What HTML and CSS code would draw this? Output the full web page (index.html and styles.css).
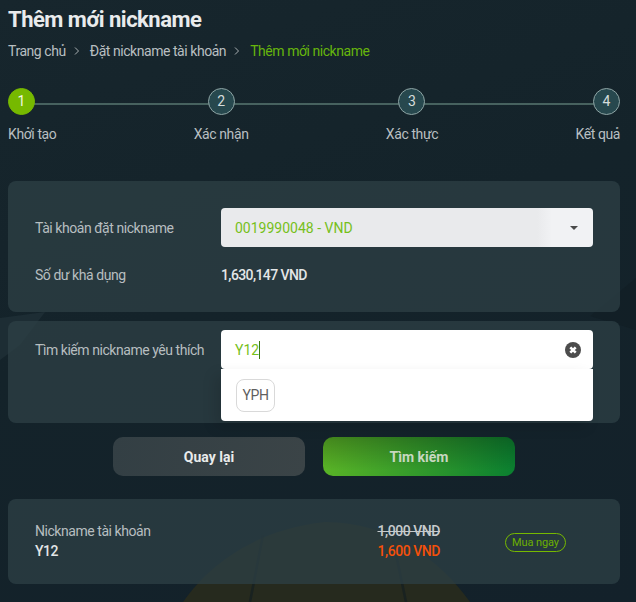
FILE: index.html
```html
<!DOCTYPE html>
<html lang="vi">
<head>
    <meta charset="UTF-8">
    <meta name="viewport" content="width=device-width, initial-scale=1.0">
    <title>Thêm mới nickname</title>
    <link rel="stylesheet" href="styles.css">
</head>
<body>
    <!-- background picture -->
    <svg class="backdrop" width="636" height="602" viewBox="0 0 636 602" aria-hidden="true">
        <path d="M183 602 C205 570 250 530 325 522 C390 522 440 560 470 602 Z" fill="#262a1e"/>
        <path d="M250 602 L263 535 M406 602 L393 540" stroke="#141f22" stroke-width="2.5" opacity="0.7"/>
        <path d="M0 318 L45 312 L20 345 L0 360 Z" fill="#2b3d43" opacity="0.4"/>
        <path d="M590 316 L636 278 L636 330 L610 322 Z" fill="#101c22" opacity="0.5"/>
    </svg>

    <div class="page">
        <h1 class="title">Thêm mới nickname</h1>
        <div class="breadcrumb">
            <span>Trang chủ</span>
            <svg class="sep" width="24" height="8" viewBox="0 0 24 8"><path d="M9 0.5 L12.5 4 L9 7.5" fill="none" stroke="#a9b0b2"/></svg>
            <span>Đặt nickname tài khoản</span>
            <svg class="sep" width="24" height="8" viewBox="0 0 24 8"><path d="M9 0.5 L12.5 4 L9 7.5" fill="none" stroke="#a9b0b2"/></svg>
            <span class="current">Thêm mới nickname</span>
        </div>

        <div class="stepper">
            <div class="step first active">
                <div class="dot">1</div>
                <div class="step-label">Khởi tạo</div>
            </div>
            <div class="step">
                <div class="dot">2</div>
                <div class="step-label">Xác nhận</div>
            </div>
            <div class="step">
                <div class="dot">3</div>
                <div class="step-label">Xác thực</div>
            </div>
            <div class="step last">
                <div class="dot">4</div>
                <div class="step-label">Kết quả</div>
            </div>
        </div>

        <div class="card card-account">
            <div class="row">
                <div class="label">Tài khoản đặt nickname</div>
                <div class="select">
                    <span>0019990048 - VND</span>
                    <span class="caret"></span>
                </div>
            </div>
            <div class="row row-balance">
                <div class="label">Số dư khả dụng</div>
                <div class="balance">1,630,147 VND</div>
            </div>
        </div>

        <div class="card card-search">
            <div class="row row-search">
                <div class="label">Tìm kiếm nickname yêu thích</div>
                <div class="search-box">
                    <div class="search">
                        <span class="typed">Y12</span>
                        <svg class="clear" width="16" height="16" viewBox="0 0 16 16">
                            <circle cx="8" cy="8" r="8" fill="#4c4c4c"/>
                            <path d="M5.3 5.3 L10.7 10.7 M10.7 5.3 L5.3 10.7" stroke="#fff" stroke-width="2.6"/>
                        </svg>
                    </div>
                    <div class="suggest">
                        <span class="chip">YPH</span>
                    </div>
                </div>
            </div>
        </div>

        <div class="actions">
            <button class="btn btn-back">Quay lại</button>
            <button class="btn btn-search">Tìm kiếm</button>
        </div>

        <div class="card card-result">
            <div class="nick">
                <div class="label">Nickname tài khoản</div>
                <div class="nick-value">Y12</div>
            </div>
            <div class="prices">
                <div class="old-price">1,000 VND</div>
                <div class="new-price">1,600 VND</div>
            </div>
            <a class="buy">Mua ngay</a>
        </div>
    </div>
</body>
</html>
```

FILE: styles.css
```css
body {
    font-family: Roboto, 'Liberation Sans', sans-serif;
    margin: 0;
    padding: 0;
    width: 636px;
    height: 602px;
    overflow: hidden;
    position: relative;
    background: linear-gradient(160deg, #17262d 0%, #14232a 45%, #13212a 100%);
    color: #c6cbcd;
    font-size: 14px;
    letter-spacing: -0.45px;
}

.backdrop {
    position: absolute;
    left: 0;
    top: 0;
}

.page {
    position: relative;
    padding: 0 16px 0 8px;
}

.title {
    margin: 0;
    padding-top: 7px;
    font-size: 22px;
    line-height: 26px;
    font-weight: 700;
    letter-spacing: -0.5px;
    color: #e9ebec;
}

.breadcrumb {
    display: flex;
    align-items: center;
    margin-top: 8px;
    line-height: 20px;
    color: #b9bfc1;
}

.breadcrumb .current {
    color: #66b50c;
}

.stepper {
    display: flex;
    justify-content: space-between;
    position: relative;
    margin-top: 27px;
}

.stepper::before {
    content: "";
    position: absolute;
    left: 10px;
    right: 10px;
    top: 15px;
    height: 2px;
    background: #47625f;
}

.step {
    display: flex;
    flex-direction: column;
    align-items: center;
    position: relative;
}

.step.first {
    align-items: flex-start;
}

.step.last {
    align-items: flex-end;
}

.dot {
    width: 27px;
    height: 27px;
    box-sizing: border-box;
    border: 1px solid #8fa5a5;
    border-radius: 50%;
    background: #27484e;
    color: #d5dcdc;
    font-size: 14px;
    line-height: 25px;
    text-align: center;
    letter-spacing: 0;
}

.active .dot {
    background: #76b900;
    border-color: #76b900;
    color: #f1f6e5;
}

.step-label {
    margin-top: 9px;
    line-height: 20px;
    letter-spacing: -0.4px;
    color: #b9bfc1;
}

.card {
    width: 612px;
    box-sizing: border-box;
    background: rgba(45, 64, 69, 0.75);
    border-radius: 8px;
}

.card-account {
    height: 131px;
    margin-top: 37px;
    padding: 27px 27px 0;
}

.card-search {
    height: 102px;
    margin-top: 9px;
    padding: 9px 27px 0;
}

.row {
    display: flex;
    align-items: center;
}

.row-balance {
    margin-top: 18px;
    height: 20px;
}

.row-search {
    align-items: flex-start;
}

.label {
    width: 186px;
    flex-shrink: 0;
    line-height: 20px;
    color: #b7bec0;
}

.row-search .label {
    margin-top: 10px;
}

.select {
    width: 372px;
    height: 39px;
    box-sizing: border-box;
    display: flex;
    align-items: center;
    justify-content: space-between;
    padding: 0 14px;
    border-radius: 4px;
    background: linear-gradient(90deg, #e9eaec 85%, #f1f2f4 89%);
    color: #76c01a;
    letter-spacing: 0;
}

.caret {
    width: 0;
    height: 0;
    border-left: 4px solid transparent;
    border-right: 4px solid transparent;
    border-top: 4px solid #4a4a4a;
    margin-right: 1px;
}

.balance {
    color: #e3e6e7;
    font-weight: 500;
    letter-spacing: -0.6px;
}

.search-box {
    width: 372px;
    position: relative;
}

.search {
    height: 39px;
    box-sizing: border-box;
    display: flex;
    align-items: center;
    justify-content: space-between;
    padding: 0 12px 0 14px;
    background: #fff;
    border-radius: 4px;
    letter-spacing: 0;
}

.typed {
    color: #76c01a;
    border-right: 1px solid #3c7a10;
    line-height: 18px;
}

.clear {
    display: block;
}

.suggest {
    height: 52px;
    box-sizing: border-box;
    padding: 10px 15px;
    background: #fff;
    border-radius: 0 0 4px 4px;
    box-shadow: -6px 6px 14px rgba(0, 0, 0, 0.12);
}

.chip {
    display: block;
    width: 39px;
    height: 33px;
    box-sizing: border-box;
    border: 1px solid #d9d9d9;
    border-radius: 8px;
    line-height: 31px;
    text-align: center;
    color: #5f5f5f;
}

.actions {
    display: flex;
    justify-content: center;
    gap: 18px;
    width: 612px;
    margin-top: 14px;
}

.btn {
    width: 192px;
    height: 39px;
    border: none;
    border-radius: 10px;
    font-family: inherit;
    font-size: 14px;
    font-weight: 700;
    letter-spacing: 0;
    cursor: pointer;
}

.btn-back {
    background: linear-gradient(100deg, #333f44 0%, #3b4447 100%);
    color: #e9ebec;
}

.btn-search {
    background: linear-gradient(180deg, rgba(0, 0, 0, 0.25), rgba(0, 0, 0, 0) 85%), linear-gradient(100deg, #5cb526 0%, #0a7f30 100%);
    color: #c8d8c0;
}

.card-result {
    height: 85px;
    margin-top: 23px;
    padding: 0 27px 2px;
    display: flex;
    align-items: center;
}

.card-result .label {
    width: auto;
}

.nick {
    width: 342px;
}

.nick-value {
    color: #e3e6e7;
    font-weight: 500;
    line-height: 20px;
}

.prices {
    text-align: right;
    width: 63px;
    font-weight: 500;
    line-height: 20px;
    white-space: nowrap;
}

.old-price {
    color: #c6cbcd;
    text-decoration: line-through;
}

.new-price {
    color: #f5500a;
}

.buy {
    margin: 4px 0 0 65px;
    width: 61px;
    height: 19px;
    box-sizing: border-box;
    border: 1px solid #76b900;
    border-radius: 10px;
    font-size: 11px;
    line-height: 17px;
    text-align: center;
    letter-spacing: -0.1px;
    color: #6cb000;
}
```
